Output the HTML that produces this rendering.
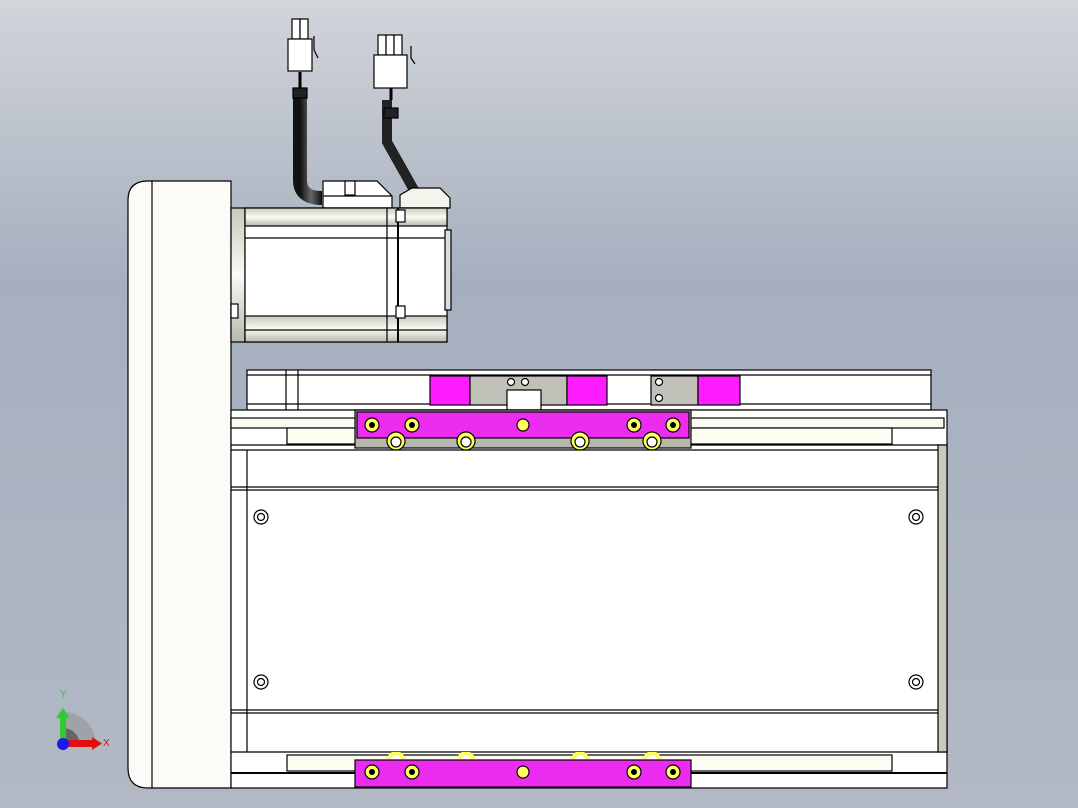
<!DOCTYPE html>
<html><head><meta charset="utf-8"><style>
html,body{margin:0;padding:0;width:1078px;height:808px;overflow:hidden}
svg{display:block}
</style></head><body>
<svg width="1078" height="808" viewBox="0 0 1078 808" xmlns="http://www.w3.org/2000/svg" font-family="Liberation Sans, sans-serif">
<defs>
<linearGradient id="bg" x1="0" y1="0" x2="0" y2="1">
<stop offset="0" stop-color="#d2d5da"/><stop offset="0.35" stop-color="#a5afbe"/><stop offset="1" stop-color="#b2b9c5"/>
</linearGradient>
<linearGradient id="cab" x1="0" y1="0" x2="1" y2="0">
<stop offset="0" stop-color="#111"/><stop offset="0.5" stop-color="#666"/><stop offset="1" stop-color="#111"/>
</linearGradient>
<linearGradient id="band" x1="0" y1="0" x2="0" y2="1">
<stop offset="0" stop-color="#c8c8bc"/><stop offset="0.5" stop-color="#fbfbf5"/><stop offset="1" stop-color="#b8b8ac"/>
</linearGradient>
<clipPath id="cb"><rect x="0" y="752" width="1078" height="8"/></clipPath>
</defs>
<rect width="1078" height="808" fill="url(#bg)"/>
<g stroke="#000" stroke-width="1.2" fill="#fff">
<path d="M300 90 V180 Q300 198 322 198" fill="none" stroke="url(#cab)" stroke-width="14"/>
<path d="M387 100 V142 L414 190" fill="none" stroke="#222" stroke-width="10"/>
<line x1="300" y1="72" x2="300" y2="90" stroke-width="3"/>
<line x1="391" y1="88" x2="391" y2="100" stroke-width="3"/>
<rect x="293" y="88" width="14" height="10" fill="#222"/>
<rect x="384" y="108" width="14" height="10" fill="#222"/>
<rect x="292" y="19" width="8" height="20"/><rect x="300" y="19" width="8" height="20"/>
<rect x="288" y="39" width="24" height="32"/>
<path d="M314 36 v14 l4 8" fill="none"/>
<rect x="378" y="35" width="8" height="20"/><rect x="386" y="35" width="8" height="20"/><rect x="394" y="35" width="8" height="20"/>
<rect x="374" y="55" width="33" height="33"/>
<path d="M411 46 v12 l4 6" fill="none"/>
<path d="M323 181 H377 L392 196 V208 H323 Z"/>
<line x1="323" y1="196" x2="392" y2="196"/>
<rect x="345" y="181" width="10" height="14"/>
<path d="M400 195 L412 188 H440 L450 198 V208 H400 Z" fill="#f4f4ec"/>
<path d="M128 200 Q128 181 148 181 H231 V788 H148 Q128 788 128 768 Z" fill="#fbfbf7"/>
<line x1="152" y1="181" x2="152" y2="788"/>
<rect x="231" y="208" width="14" height="134" fill="url(#band)"/>
<rect x="245" y="208" width="202" height="134"/>
<rect x="245" y="208" width="202" height="18" fill="url(#band)"/>
<rect x="245" y="316" width="202" height="26" fill="url(#band)"/>
<line x1="245" y1="330" x2="447" y2="330"/>
<line x1="245" y1="238" x2="447" y2="238"/>
<line x1="398" y1="208" x2="398" y2="342" stroke-width="2"/>
<line x1="387" y1="208" x2="387" y2="342"/>
<rect x="396" y="210" width="9" height="12"/><rect x="396" y="306" width="9" height="12"/>
<rect x="231" y="304" width="7" height="14"/>
<rect x="445" y="230" width="6" height="80" fill="#ddd"/>
<rect x="247" y="370" width="684" height="40"/>
<line x1="247" y1="375" x2="931" y2="375"/>
<line x1="247" y1="404" x2="931" y2="404"/>
<line x1="286" y1="370" x2="286" y2="410"/><line x1="298" y1="370" x2="298" y2="410"/>
<rect x="430" y="376" width="40" height="29" fill="#ff1cff"/>
<rect x="470" y="376" width="97" height="29" fill="#c0c0b8"/>
<rect x="567" y="376" width="40" height="29" fill="#ff1cff"/>
<rect x="651" y="376" width="47" height="29" fill="#c0c0b8"/>
<rect x="698" y="376" width="42" height="29" fill="#ff1cff"/>
<circle cx="511" cy="382" r="3.5"/><circle cx="525" cy="382" r="3.5"/>
<circle cx="659" cy="382" r="3.5"/><circle cx="659" cy="398" r="3.5"/>
<rect x="507" y="390" width="34" height="20"/>
<rect x="231" y="410" width="716" height="378" fill="#fff"/>
<rect x="231" y="418" width="713" height="10" fill="#fafaf0"/>
<rect x="287" y="428" width="605" height="16" fill="#fcfcf2"/>
<line x1="231" y1="445" x2="947" y2="445"/>
<line x1="231" y1="450" x2="947" y2="450"/>
<line x1="231" y1="487" x2="940" y2="487"/>
<line x1="231" y1="490" x2="940" y2="490"/>
<line x1="231" y1="710" x2="940" y2="710"/>
<line x1="231" y1="713" x2="940" y2="713"/>
<line x1="231" y1="752" x2="947" y2="752"/>
<rect x="287" y="755" width="605" height="16" fill="#fcfcf2"/>
<line x1="231" y1="773" x2="947" y2="773" stroke-width="2"/>
<line x1="247" y1="450" x2="247" y2="752"/>
<rect x="938" y="445" width="9" height="307" fill="#c8c8c0"/>
<rect x="355" y="410" width="336" height="38" fill="#b8b8ae"/>
<rect x="357" y="412" width="332" height="26" fill="#ec2cf0"/>
<g clip-path="url(#cb)">
<circle cx="396" cy="760" r="7" fill="#fff" stroke="#ffff60" stroke-width="4"/>
<circle cx="466" cy="760" r="7" fill="#fff" stroke="#ffff60" stroke-width="4"/>
<circle cx="580" cy="760" r="7" fill="#fff" stroke="#ffff60" stroke-width="4"/>
<circle cx="652" cy="760" r="7" fill="#fff" stroke="#ffff60" stroke-width="4"/>
</g>
<rect x="355" y="760" width="336" height="27" fill="#ec2cf0"/>
<g fill="#ffff60">
<circle cx="372" cy="425" r="7"/><circle cx="412" cy="425" r="7"/><circle cx="634" cy="425" r="7"/><circle cx="673" cy="425" r="7"/>
<circle cx="523" cy="425" r="6"/><circle cx="523" cy="772" r="6"/>
<circle cx="372" cy="772" r="7"/><circle cx="412" cy="772" r="7"/><circle cx="634" cy="772" r="7"/><circle cx="673" cy="772" r="7"/>
<circle cx="396" cy="441" r="9"/><circle cx="466" cy="441" r="9"/><circle cx="580" cy="441" r="9"/><circle cx="652" cy="441" r="9"/>
</g>
<g fill="#000" stroke="none">
<circle cx="372" cy="425" r="3"/><circle cx="412" cy="425" r="3"/><circle cx="634" cy="425" r="3"/><circle cx="673" cy="425" r="3"/>
<circle cx="372" cy="772" r="3"/><circle cx="412" cy="772" r="3"/><circle cx="634" cy="772" r="3"/><circle cx="673" cy="772" r="3"/>
</g>
<g fill="#fff">
<circle cx="396" cy="442" r="5"/><circle cx="466" cy="442" r="5"/><circle cx="580" cy="442" r="5"/><circle cx="652" cy="442" r="5"/>
</g>
<g fill="none">
<circle cx="261" cy="517" r="7"/><circle cx="261" cy="517" r="3.5"/>
<circle cx="916" cy="517" r="7"/><circle cx="916" cy="517" r="3.5"/>
<circle cx="261" cy="682" r="7"/><circle cx="261" cy="682" r="3.5"/>
<circle cx="916" cy="682" r="7"/><circle cx="916" cy="682" r="3.5"/>
</g>
</g>
<path d="M63 745 L63 712 A33 33 0 0 1 96 745 Z" fill="#9ea3a9"/>
<path d="M63 745 L63 728 A17 17 0 0 1 80 745 Z" fill="#666"/>
<rect x="60" y="716" width="6" height="29" fill="#2ecc2e"/>
<path d="M56 718 L63 708 L70 718 Z" fill="#2ecc2e"/>
<rect x="63" y="740" width="30" height="7" fill="#e01010"/>
<path d="M92 737 L102 743.5 L92 750 Z" fill="#e01010"/>
<circle cx="63" cy="744" r="6" fill="#1a1aee"/>
<text x="60" y="697" font-size="10" fill="#2ecc2e">Y</text>
<text x="103" y="746" font-size="10" fill="#e01010">X</text>
</svg>
</body></html>
